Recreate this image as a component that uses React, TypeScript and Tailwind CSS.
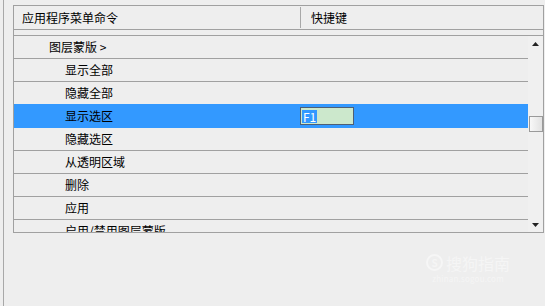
const rows = [
  { label: '图层蒙版 >', indent: 'pl-[35px]' },
  { label: '显示全部', indent: 'pl-[51px]' },
  { label: '隐藏全部', indent: 'pl-[51px]' },
  { label: '显示选区', indent: 'pl-[51px]', selected: true, key: 'F1' },
  { label: '隐藏选区', indent: 'pl-[51px]' },
  { label: '从透明区域', indent: 'pl-[51px]' },
  { label: '删除', indent: 'pl-[51px]' },
  { label: '应用', indent: 'pl-[51px]' },
  { label: '启用/禁用图层蒙版', indent: 'pl-[51px]' },
];

function ScrollBar() {
  return (
    <div className="w-[15px] shrink-0 flex flex-col items-center bg-[#f0f0f0]">
      <div className="h-[15px] w-full flex items-center justify-center">
        <svg width="7" height="4" viewBox="0 0 7 4">
          <path d="M0 4 L3.5 0 L7 4 Z" fill="#222" />
        </svg>
      </div>
      <div className="h-[65px]" />
      <div className="h-[16px] w-[14px] border border-[#9a9a9a] bg-gradient-to-r from-[#f8f8f8] to-[#e2e2e2]" />
      <div className="flex-1" />
      <div className="h-[15px] w-full flex items-center justify-center">
        <svg width="7" height="4" viewBox="0 0 7 4">
          <path d="M0 0 L7 0 L3.5 4 Z" fill="#222" />
        </svg>
      </div>
    </div>
  );
}

export default function App() {
  return (
    <div
      className="relative w-[545px] h-[306px] overflow-hidden bg-[#eeeeee] pl-[3px] text-[12px] text-black"
      style={{ fontFamily: '"Noto Sans CJK SC", "Noto Sans", sans-serif' }}
    >
      <div className="h-full border-l border-[#a8a8a8] pl-[9px] pt-[5px]">
        <div className="w-[531px] h-[228px] border border-[#a0a0a0] flex flex-col">
          {/* header */}
          <div className="h-[24px] shrink-0 flex items-center border-b border-[#a0a0a0]">
            <div className="w-[286px] pl-[8px] leading-none">应用程序菜单命令</div>
            <div className="h-[21px] border-l border-[#a8a8a8]" />
            <div className="pl-[10px] leading-none">快捷键</div>
          </div>
          <div className="h-[5px] shrink-0" />
          {/* list */}
          <div className="flex-1 flex border-t border-[#a0a0a0] overflow-hidden">
            <div className="flex-1 flex flex-col overflow-hidden">
              {rows.map((r, i) => (
                <div
                  key={r.label}
                  className={`shrink-0 flex items-center ${
                    i === 0 ? 'h-[22px]' : 'h-[23px] border-t'
                  } ${
                    r.selected || rows[i - 1]?.selected
                      ? 'border-[#3399ff]'
                      : 'border-[#a0a0a0]'
                  } ${r.selected ? 'bg-[#3399ff]' : ''}`}
                >
                  <div className={`w-[286px] leading-none ${r.indent}`}>{r.label}</div>
                  {r.key && (
                    <div className="h-[18px] w-[54px] border border-[#4f5f74] bg-[#cce8cc] flex items-center pl-[1px]">
                      <span className="bg-[#3399ff] text-white leading-[13px] px-[1px]">{r.key}</span>
                    </div>
                  )}
                </div>
              ))}
            </div>
            <ScrollBar />
          </div>
        </div>
      </div>
      {/* watermark */}
      <div className="absolute left-[426px] top-[254px] flex flex-col items-center text-white/45">
        <div className="flex items-center gap-[3px]">
          <div className="w-[17px] h-[17px] rounded-full border-2 border-white/45 flex items-center justify-center text-[10px] font-bold leading-none">
            S
          </div>
          <span className="text-[16px] leading-none">搜狗指南</span>
        </div>
        <span className="text-[8px] leading-none mt-[4px] tracking-wide">zhinan.sogou.com</span>
      </div>
    </div>
  );
}
